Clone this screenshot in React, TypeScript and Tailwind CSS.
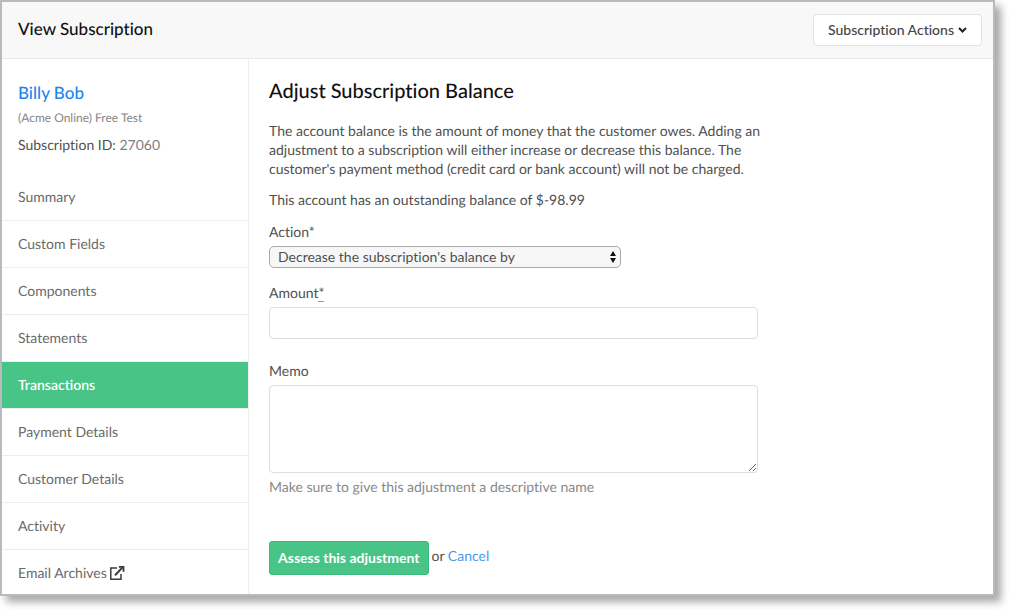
import { useState } from 'react';
import type { FormEvent } from 'react';
import clsx from 'clsx';

const navItems = [
  { label: 'Summary' },
  { label: 'Custom Fields' },
  { label: 'Components' },
  { label: 'Statements' },
  { label: 'Transactions' },
  { label: 'Payment Details' },
  { label: 'Customer Details' },
  { label: 'Activity' },
  { label: 'Email Archives', external: true },
];

function ChevronIcon() {
  return (
    <svg className="w-[9px] h-[6px]" viewBox="0 0 9 6" fill="none" aria-hidden="true">
      <path d="M1 1l3.5 3.5L8 1" stroke="#222" strokeWidth="2" />
    </svg>
  );
}

function ExternalIcon() {
  return (
    <svg className="w-4 h-4" viewBox="0 0 16 16" fill="none" stroke="#3c3c3c" aria-hidden="true">
      <path d="M8 3H1.8v11.2H12V9" strokeWidth="1.5" />
      <path d="M6 10.2L13.5 2.4" strokeWidth="2" />
      <path d="M9.8 1.8h4.7v4.9" strokeWidth="1.8" />
    </svg>
  );
}

function UpDownIcon() {
  return (
    <svg className="w-[6px] h-3" viewBox="0 0 6 12" fill="#111" aria-hidden="true">
      <path d="M3 0l3 5H0z" />
      <path d="M3 12l3-5H0z" />
    </svg>
  );
}

function Sidebar() {
  const [active, setActive] = useState('Transactions');

  return (
    <aside className="w-[247px] shrink-0 border-r border-[#ededed]">
      <div className="px-4 pt-6 pb-[17px]">
        <a href="#customer" className="block text-[17px] leading-5 font-medium text-[#1c86ee]">
          Billy Bob
        </a>
        <p className="mt-1 text-xs leading-[22px] text-[#858585]">(Acme Online) Free Test</p>
        <p className="mt-1 leading-6">
          Subscription ID: <span className="text-[#808080]">27060</span>
        </p>
      </div>
      <nav>
        <ul>
          {navItems.map((item) => (
            <li key={item.label} className="border-b border-[#ededed] last:border-b-0">
              <a
                href="#"
                onClick={() => setActive(item.label)}
                className={clsx(
                  'flex items-center gap-[2px] px-4 leading-[22px]',
                  item.external ? 'pt-3 pb-[10px]' : 'py-3',
                  item.label === active ? 'bg-[#47c486] font-semibold text-white' : 'text-[#6a6a6a]',
                )}
              >
                {item.label}
                {item.external && <ExternalIcon />}
              </a>
            </li>
          ))}
        </ul>
      </nav>
    </aside>
  );
}

function AdjustmentForm() {
  const [amount, setAmount] = useState('');
  const [memo, setMemo] = useState('');

  const handleSubmit = (e: FormEvent) => {
    e.preventDefault();
  };

  return (
    <form onSubmit={handleSubmit} className="w-full max-w-[489px]">
      <label htmlFor="action" className="block mt-3 leading-5">
        Action*
      </label>
      <div className="mt-1 grid w-[352px] max-w-full items-center">
        <select
          id="action"
          className="col-start-1 row-start-1 h-[22px] w-full appearance-none rounded-[5px] border border-[#a9a9a9] bg-[#f7f7f7] pl-2 pr-5 leading-5"
        >
          <option>Decrease the subscription's balance by</option>
          <option>Increase the subscription's balance by</option>
        </select>
        <span className="pointer-events-none col-start-1 row-start-1 mr-[5px] justify-self-end">
          <UpDownIcon />
        </span>
      </div>

      <label htmlFor="amount" className="block mt-[15px] leading-5">
        Amount
        <abbr title="required" className="border-b border-[#999] no-underline">
          *
        </abbr>
      </label>
      <input
        id="amount"
        type="text"
        value={amount}
        onChange={(e) => setAmount(e.target.value)}
        className="mt-1 block h-8 w-full rounded border border-[#dedede] bg-white px-2"
      />

      <label htmlFor="memo" className="block mt-[22px] leading-5">
        Memo
      </label>
      <textarea
        id="memo"
        value={memo}
        onChange={(e) => setMemo(e.target.value)}
        className="mt-1 block h-[88px] w-full rounded border border-[#dedede] bg-white p-2"
      />
      <p className="mt-1 leading-5 text-[#888]">Make sure to give this adjustment a descriptive name</p>

      <div className="mt-11 flex items-center gap-[3px]">
        <button
          type="submit"
          className="h-[34px] rounded-[3px] border border-[#3cba7b] bg-[#47c486] px-2 font-bold text-white"
        >
          Assess this adjustment
        </button>
        <span className="pb-1">
          or{' '}
          <a href="#cancel" className="text-[#4a98ee]">
            Cancel
          </a>
        </span>
      </div>
    </form>
  );
}

export default function App() {
  return (
    <div className="bg-white pr-[14px] pb-[14px] font-[Lato,sans-serif] text-sm text-[#505050] [font-variant-ligatures:none] [text-rendering:geometricPrecision]">
      <div className="border-2 border-[#b6bbbf] bg-white shadow-[6px_6px_8px_rgba(0,0,0,0.35)]">
        <header className="flex items-center justify-between border-b border-[#e8e8e8] bg-[#f8f8f8] py-3 pl-4 pr-[11px]">
          <h1 className="pb-[2px] text-[17px] leading-6 font-medium text-[#111]">View Subscription</h1>
          <button
            type="button"
            className="flex h-8 items-center gap-1 rounded border border-[#e2e2e2] bg-white px-[14px] font-medium text-[#444]"
          >
            Subscription Actions
            <ChevronIcon />
          </button>
        </header>

        <div className="flex">
          <Sidebar />
          <main className="min-w-0 flex-1 px-5 pt-5">
            <h2 className="text-xl leading-6 font-medium text-[#111]">Adjust Subscription Balance</h2>
            <p className="mt-[18px] max-w-[500px] leading-[19px]">
              The account balance is the amount of money that the customer owes. Adding an adjustment to a
              subscription will either increase or decrease this balance. The customer's payment method (credit
              card or bank account) will not be charged.
            </p>
            <p className="mt-3 leading-5">This account has an outstanding balance of $-98.99</p>
            <AdjustmentForm />
          </main>
        </div>
      </div>
    </div>
  );
}
